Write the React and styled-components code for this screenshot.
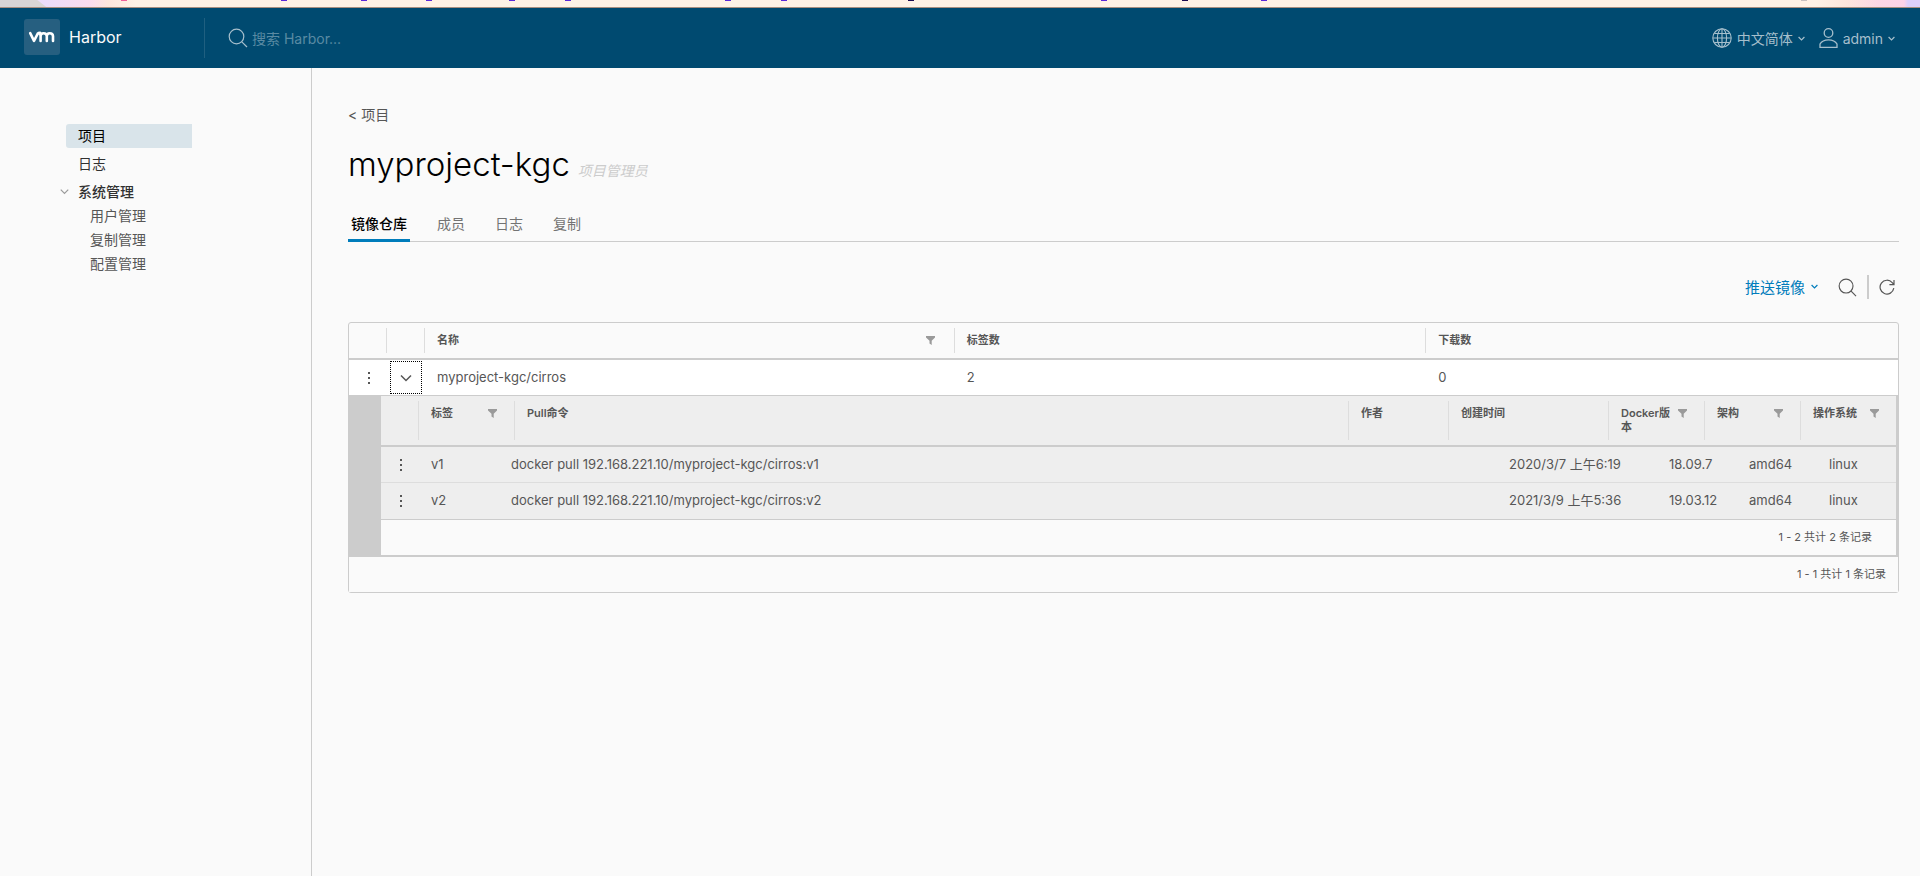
import React from 'react'
import styled, { createGlobalStyle } from 'styled-components'

const GlobalStyle = createGlobalStyle`
    * {
        box-sizing: border-box;
    }
    body {
        margin: 0;
        background: #fafafa;
        color: #565656;
        font-family: Inter, "Noto Sans CJK SC", sans-serif;
        font-size: 13px;
        line-height: 24px;
    }
    button, input {
        font-family: inherit;
    }
    button {
        border: 0;
        padding: 0;
        background: none;
        cursor: pointer;
    }
    a {
        color: inherit;
        text-decoration: none;
    }
`

const Page = styled.div`
    display: flex;
    flex-direction: column;
    min-height: 100vh;
`

const Banner = styled.div`
    height: 8px;
    border-bottom: 1px solid #a98f80;
    background:
        linear-gradient(38deg, #d9d5d5 28px, transparent 29px),
        linear-gradient(270deg, #dcd0fc 12px, #fdd3e8 16px, #fdd6e4 42px, #ffe6dc 74px, transparent 104px),
        linear-gradient(90deg, #ecdcfa 46px, #fbdcee 90px, #ffe6dc 108px, #fff2e6 136px);
`

const BannerMarks = styled.svg`
    display: block;
    width: 100%;
    height: 1px;
`

const Header = styled.header`
    display: flex;
    align-items: center;
    height: 60px;
    background: #004a70;
    color: #fafafa;
`

const Brand = styled.a`
    display: flex;
    align-items: center;
    gap: 9px;
    width: 205px;
    height: 40px;
    padding: 0 0 2px 24px;
    border-right: 1px solid #1f5f80;
    font-size: 16px;
`

const Search = styled.label`
    display: flex;
    flex: 1;
    align-items: center;
    gap: 4px;
    padding-left: 23px;
    color: #a6bfcc;
`

const SearchInput = styled.input`
    width: 240px;
    border: 0;
    padding: 0;
    outline: 0;
    background: none;
    color: #fafafa;
    font-size: 14px;

    &::placeholder {
        color: #5a8aa3;
        opacity: 1;
    }
`

const HeaderActions = styled.div`
    display: flex;
    gap: 14px;
    padding-right: 25px;
`

const HeaderButton = styled.button`
    display: flex;
    align-items: center;
    gap: 5px;
    color: #a6bfcc;
    font-size: 14px;
`

const Body = styled.div`
    display: flex;
    flex: 1;
`

const Sidebar = styled.nav`
    flex: none;
    width: 312px;
    padding: 56px 0 0 60px;
    border-right: 1px solid #ccc;
`

const NavList = styled.ul`
    display: flex;
    flex-direction: column;
    gap: ${props => props.$nested ? '0' : '4px'};
    margin: 0;
    padding: 0;
    list-style: none;
`

const NavLink = styled.a`
    display: block;
    width: 126px;
    height: 24px;
    margin-left: 6px;
    padding-left: ${props => props.$nested ? '24px' : '12px'};
    border-radius: 3px 0 0 3px;
    background: ${props => props.$active ? '#d9e4ea' : 'transparent'};
    color: ${props => props.$active ? '#000' : props.$nested ? '#565656' : '#313131'};
    font-size: 14px;
`

const GroupToggle = styled.button`
    display: flex;
    align-items: center;
    gap: 9px;
    height: 24px;
    padding-bottom: 2px;
    color: #313131;
    font-size: 14px;
    font-weight: 500;

    svg {
        color: #9a9a9a;
    }
`

const Main = styled.main`
    flex: 1;
    min-width: 0;
    padding: 35px 21px 24px 36px;
`

const BackLink = styled.a`
    display: block;
    font-size: 14px;
`

const TitleRow = styled.div`
    display: flex;
    align-items: baseline;
    gap: 8px;
    margin-top: 13px;
`

const Title = styled.h1`
    margin: 0;
    color: #000;
    font-size: 33px;
    font-weight: 300;
    line-height: 48px;
`

const Role = styled.em`
    color: #ccc;
    font-size: 14px;
`

const Tabs = styled.div`
    display: flex;
    gap: 24px;
    height: 36px;
    margin-top: 18px;
    box-shadow: inset 0 -1px 0 #ccc;
`

const Tab = styled.button`
    padding: 0 3px 2px;
    color: ${props => props.$active ? '#000' : '#737373'};
    box-shadow: ${props => props.$active ? 'inset 0 -3px 0 #007cbb' : 'none'};
    font-size: 14px;
    font-weight: ${props => props.$active ? 500 : 400};
`

const Toolbar = styled.div`
    display: flex;
    align-items: center;
    justify-content: flex-end;
    height: 24px;
    margin: 33px 4px 23px 0;
`

const PushButton = styled.button`
    display: flex;
    align-items: center;
    gap: 6px;
    margin-right: 20px;
    padding-bottom: 2px;
    color: #007cbb;
    font-size: 15px;
`

const IconButton = styled.button`
    display: flex;
    color: #565656;
`

const Divider = styled.span`
    width: 2px;
    height: 24px;
    margin: 0 10px;
    background: #ccc;
`

const Datagrid = styled.div`
    border: 1px solid #ccc;
    border-radius: 3px;
`

const Table = styled.table`
    display: block;

    thead, tbody {
        display: block;
    }
`

const RepoRow = styled.tr`
    display: grid;
    grid-template-columns: 37px 38px minmax(0, 530fr) minmax(0, 472fr) minmax(0, 473fr);
    height: ${props => props.$head ? '37px' : '35px'};
    border-bottom: ${props => props.$head ? '2px solid #ccc' : '0'};
    background: ${props => props.$head ? 'transparent' : '#fff'};
`

const TagHeadRow = styled.tr`
    display: grid;
    grid-template-columns: 37px 96px minmax(0, 1fr) 100px 160px 96px 96px 96px;
    border-bottom: 2px solid #ccc;
`

const TagRow = styled.tr`
    display: grid;
    grid-template-columns: 37px 80px minmax(0, 1fr) 98px 160px 80px 80px 80px;
    height: 36px;
    border-bottom: 1px solid #ddd;

    &:last-child {
        height: 37px;
        border-bottom-color: #ccc;
    }
`

const HeadCell = styled.th`
    display: flex;
    align-items: flex-start;
    justify-content: space-between;
    margin: 5px 0;
    padding: 5px 19px 0 12px;
    border-left: 1px solid #ddd;
    font-size: 11px;
    font-weight: 600;
    line-height: 14px;
    text-align: left;

    &:first-child {
        border-left: 0;
    }

    svg {
        flex: none;
        margin-top: 3px;
    }
`

const TagHeadCell = styled(HeadCell)`
    min-height: 39px;
    padding-right: 17px;
`

const Cell = styled.td`
    display: flex;
    align-items: center;
    justify-content: ${props => props.$center ? 'center' : 'flex-start'};
    padding: ${props => props.$center ? '0 0 0 2px' : '0 0 2px 13px'};
    white-space: nowrap;
`

const ExpandButton = styled(IconButton)`
    align-items: center;
    justify-content: center;
    width: 32px;
    height: 33px;
    border: 1px dotted #000;
`

const DetailRow = styled.tr`
    display: block;
    border-top: 1px solid #ccc;
`

const DetailCell = styled.td`
    display: block;
    padding: 0 0 0 32px;
    background: #ccc;
`

const Detail = styled.div`
    border-right: 2px solid #ccc;
    border-bottom: 2px solid #ccc;
    background: #eee;
`

const Footer = styled.div`
    display: flex;
    align-items: center;
    justify-content: flex-end;
    height: 35px;
    padding: ${props => props.$inner ? '0 24px 2px 0' : '0 12px 2px 0'};
    background: #fafafa;
    font-size: 11px;
`

const navItems = ['用户管理', '复制管理', '配置管理']
const tabs = ['镜像仓库', '成员', '日志', '复制']
const bannerMarks = [
  [121, '#f0609a'], [281, '#5a28d8'], [361, '#5a28d8'], [426, '#5a28d8'], [509, '#5a28d8'],
  [565, '#5a28d8'], [725, '#5a28d8'], [781, '#5a28d8'], [908, '#1c0a50'], [1101, '#5a28d8'],
  [1182, '#1c0a50'], [1261, '#5a28d8'], [1801, '#c8c0c0']
]
const repoColumns = [
  { name: '' }, { name: '' }, { name: '名称', filter: true }, { name: '标签数' }, { name: '下载数' }
]
const tagColumns = [
  { name: '' },
  { name: '标签', filter: true },
  { name: 'Pull命令' },
  { name: '作者' },
  { name: '创建时间' },
  { name: 'Docker版本', filter: true },
  { name: '架构', filter: true },
  { name: '操作系统', filter: true }
]
const tags = [
  { name: 'v1', created: '2020/3/7 上午6:19', docker: '18.09.7' },
  { name: 'v2', created: '2021/3/9 上午5:36', docker: '19.03.12' }
]

function Caret({ size = 7, width = 1.2 }) {
  return (
    <svg width={size} height={size} viewBox="0 0 12 12" fill="none" stroke="currentColor" strokeWidth={width * 12 / size}>
      <path d="M1 3.5 6 8.5 11 3.5" />
    </svg>
  )
}

function SearchIcon({ size = 20 }) {
  return (
    <svg width={size} height={size} viewBox="0 0 20 20" fill="none" stroke="currentColor" strokeWidth="1.2">
      <circle cx="8.5" cy="8.5" r="7.3" />
      <path d="M13.8 13.8 19 19" />
    </svg>
  )
}

function FilterIcon() {
  return (
    <svg width="9" height="9" viewBox="0 0 9 9" fill="#9a9a9a">
      <path d="M0 0h9v1.5L5.7 4.8V9L3.5 7.6V4.8L0 1.5z" />
    </svg>
  )
}

function Dots() {
  return (
    <svg width="4" height="14" viewBox="0 0 4 14" fill="#565656">
      <rect x="1" y="1" width="2" height="2" />
      <rect x="1" y="6" width="2" height="2" />
      <rect x="1" y="11" width="2" height="2" />
    </svg>
  )
}

function Logo() {
  return (
    <svg width="36" height="36" viewBox="0 0 36 36" fill="none" stroke="#fff" strokeWidth="2.6" strokeLinecap="round" strokeLinejoin="round">
      <rect width="36" height="36" rx="3" fill="#265f80" stroke="none" />
      <path d="M6.2 14.2 10 21.8 14 14.2Q14.4 13.7 16 13.7M16.6 22V17Q16.6 14.2 19.6 14.2T22.8 17V22M22.8 17Q22.8 14.2 25.8 14.2T29 17V22M16.6 17Q16.6 14.4 14.6 14" />
    </svg>
  )
}

function Topbar() {
  return (
    <Header>
        <Brand href="#"><Logo />Harbor</Brand>
        <Search>
            <SearchIcon />
            <SearchInput type="text" placeholder="搜索 Harbor..." aria-label="搜索 Harbor..." />
        </Search>
        <HeaderActions>
            <HeaderButton>
                <svg width="20" height="20" viewBox="0 0 20 20" fill="none" stroke="currentColor" strokeWidth="1.1">
                    <circle cx="10" cy="10" r="9.2" />
                    <ellipse cx="10" cy="10" rx="4.6" ry="9.2" />
                    <path d="M10 1v18M1 10h18M2.5 5.5h15M2.5 14.5h15" />
                </svg>
                中文简体
                <Caret />
            </HeaderButton>
            <HeaderButton>
                <svg width="19" height="20" viewBox="0 0 19 20" fill="none" stroke="currentColor" strokeWidth="1.3">
                    <circle cx="9.5" cy="5" r="4.3" />
                    <path d="M1 19.3V16C2.5 13.3 5.6 11.8 9.5 11.8S16.5 13.3 18 16V19.3Z" />
                </svg>
                admin
                <Caret />
            </HeaderButton>
        </HeaderActions>
    </Header>
  )
}

function SideNav() {
  return (
    <Sidebar>
        <NavList>
            <li><NavLink href="#" $active>项目</NavLink></li>
            <li><NavLink href="#">日志</NavLink></li>
            <li>
                <GroupToggle><Caret size={9} />系统管理</GroupToggle>
                <NavList $nested>
                    {navItems.map(item => <li key={item}><NavLink href="#" $nested>{item}</NavLink></li>)}
                </NavList>
            </li>
        </NavList>
    </Sidebar>
  )
}

function TagTable() {
  return (
    <Detail>
        <Table>
            <thead>
                <TagHeadRow>
                    {tagColumns.map((col, i) => (
                      <TagHeadCell key={i}>{col.name}{col.filter && <FilterIcon />}</TagHeadCell>
                    ))}
                </TagHeadRow>
            </thead>
            <tbody>
                {tags.map(tag => (
                  <TagRow key={tag.name}>
                      <Cell $center><IconButton aria-label="操作"><Dots /></IconButton></Cell>
                      <Cell>{tag.name}</Cell>
                      <Cell>docker pull 192.168.221.10/myproject-kgc/cirros:{tag.name}</Cell>
                      <Cell />
                      <Cell>{tag.created}</Cell>
                      <Cell>{tag.docker}</Cell>
                      <Cell>amd64</Cell>
                      <Cell>linux</Cell>
                  </TagRow>
                ))}
            </tbody>
        </Table>
        <Footer $inner>1 - 2 共计 2 条记录</Footer>
    </Detail>
  )
}

function App() {
  return (
    <Page>
        <GlobalStyle />
        <Banner>
            <BannerMarks>
                {bannerMarks.map(([x, color]) => <rect key={x} x={x} width="6" height="1" fill={color} />)}
            </BannerMarks>
        </Banner>
        <Topbar />
        <Body>
            <SideNav />
            <Main>
                <BackLink href="#">&lt; 项目</BackLink>
                <TitleRow>
                    <Title>myproject-kgc</Title>
                    <Role>项目管理员</Role>
                </TitleRow>
                <Tabs>
                    {tabs.map((tab, i) => <Tab key={tab} $active={i === 0}>{tab}</Tab>)}
                </Tabs>
                <Toolbar>
                    <PushButton>推送镜像<Caret /></PushButton>
                    <IconButton aria-label="搜索"><SearchIcon size={19} /></IconButton>
                    <Divider />
                    <IconButton aria-label="刷新">
                        <svg width="16" height="16" viewBox="0 0 16 16" fill="none" stroke="currentColor" strokeWidth="1.2">
                            <path d="M14.8 9.2A6.9 6.9 0 1 1 13.2 3.6L14.6 5.2M15 1V5.6H10.4" />
                        </svg>
                    </IconButton>
                </Toolbar>
                <Datagrid>
                    <Table>
                        <thead>
                            <RepoRow $head>
                                {repoColumns.map((col, i) => (
                                  <HeadCell key={i}>{col.name}{col.filter && <FilterIcon />}</HeadCell>
                                ))}
                            </RepoRow>
                        </thead>
                        <tbody>
                            <RepoRow>
                                <Cell $center><IconButton aria-label="操作"><Dots /></IconButton></Cell>
                                <Cell $center><ExpandButton aria-label="展开"><Caret size={12} width={1.5} /></ExpandButton></Cell>
                                <Cell>myproject-kgc/cirros</Cell>
                                <Cell>2</Cell>
                                <Cell>0</Cell>
                            </RepoRow>
                            <DetailRow>
                                <DetailCell><TagTable /></DetailCell>
                            </DetailRow>
                        </tbody>
                    </Table>
                    <Footer>1 - 1 共计 1 条记录</Footer>
                </Datagrid>
            </Main>
        </Body>
    </Page>
  )
}

export default App;
